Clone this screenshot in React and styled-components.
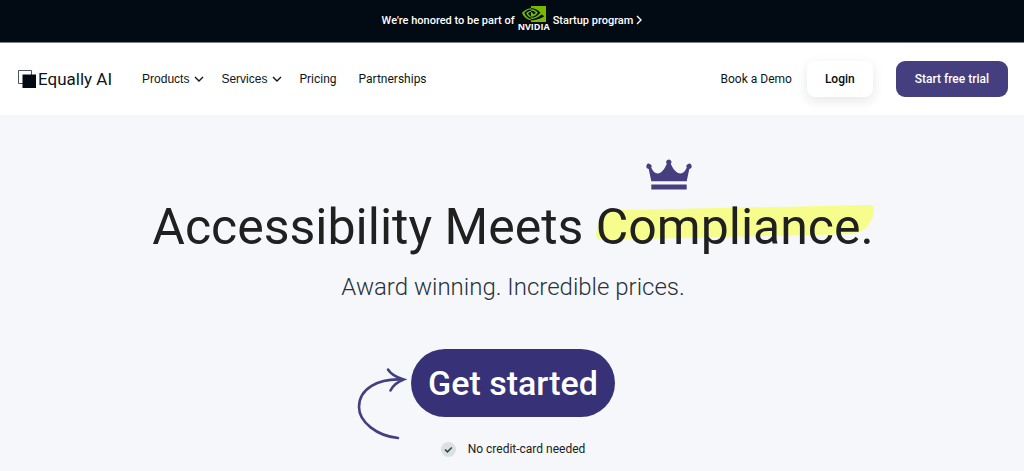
import React from "react";
import styled, { createGlobalStyle } from "styled-components";
import { SiNvidia } from "react-icons/si";

const GlobalStyle = createGlobalStyle`
  * {
    box-sizing: border-box;
  }

  body {
    margin: 0;
    background: #f6f7fb;
    color: #0b1620;
    font-family: Roboto, "Liberation Sans", sans-serif;
    font-size: 12px;
  }

  a {
    color: inherit;
    text-decoration: none;
  }
`;

// Banner
const Banner = styled.a`
  display: flex;
  align-items: center;
  justify-content: center;
  gap: 3px;
  height: 43px;
  padding-bottom: 2px;
  border-bottom: 1px solid #7d8288;
  background: #020a14;
  && {
    color: #fff;
  }
  font-size: 11px;
  font-weight: 500;
`;

const Nvidia = styled.span`
  display: flex;
  flex-direction: column;
  align-items: center;
  width: 32px;
  padding-bottom: 4px;
  font-family: "Open Sans", sans-serif;
  font-size: 9px;
  font-weight: 700;
  line-height: 8px;

  svg {
    width: 24px;
    height: 24px;
    margin: -4px 0 -3px;
    color: #76b900;
  }
`;

const BannerArrow = styled.svg`
  width: 6px;
  height: 10px;
`;

// Header
const Header = styled.header`
  display: flex;
  align-items: center;
  min-height: 72px;
  padding: 0 16px 0 18px;
  background: #fff;
`;

const Logo = styled.a`
  display: flex;
  align-items: center;
  gap: 2px;
  margin-right: 30px;
  font-size: 17px;

  svg {
    width: 18px;
    height: 18px;
  }
`;

const Nav = styled.nav`
  display: flex;
  align-items: center;
  gap: 22px;
  flex: 1;
`;

const MenuButton = styled.button`
  display: flex;
  align-items: center;
  gap: 5px;
  margin-right: -5px;
  padding: 0;
  border: 0;
  background: none;
  color: inherit;
  font: 12px "Liberation Sans", Arial, sans-serif;

  svg {
    width: 10px;
    height: 6px;
  }
`;

const Actions = styled.div`
  display: flex;
  align-items: center;
`;

const Button = styled.button`
  height: 36px;
  padding: 0 ${(props) => (props.$primary ? "19px" : "18px")};
  border: 0;
  border-radius: ${(props) => (props.$primary ? "9px" : "8px")};
  background: ${(props) => (props.$primary ? "#453f80" : "#fff")};
  color: ${(props) => (props.$primary ? "#fff" : "#020a14")};
  box-shadow: ${(props) =>
    props.$primary ? "none" : "0 4px 12px rgba(20, 40, 60, 0.11)"};
  margin-left: ${(props) => (props.$primary ? "23px" : "15px")};
  font-family: inherit;
  font-size: 12px;
  font-weight: 500;
`;

// Hero
const Hero = styled.main`
  display: flex;
  flex-direction: column;
  align-items: center;
  padding: 80px 16px 12px 18px;
  text-align: center;
`;

const Title = styled.h1`
  margin: 0;
  color: #202020;
  font-size: 50px;
  font-weight: 400;
  line-height: 64px;
`;

const Marked = styled.span`
  position: relative;
  display: inline-block;
  isolation: isolate;
`;

const Highlight = styled.svg`
  position: absolute;
  z-index: -1;
  top: 10px;
  left: 0;
  width: 100%;
  height: 36px;
`;

const Crown = styled.svg`
  position: absolute;
  top: -36px;
  left: 50px;
  width: 46px;
  height: 32px;
`;

const Subtitle = styled.p`
  margin: 12px 0 0;
  color: #27313b;
  font-size: 24px;
  font-weight: 300;
  line-height: 32px;
`;

const StartWrapper = styled.div`
  position: relative;
  margin-top: 46px;
`;

const StartButton = styled.button`
  height: 68px;
  padding: 0 17px;
  border: 0;
  border-radius: 34px;
  background: #373277;
  color: #fff;
  font-family: inherit;
  font-size: 34px;
  font-weight: 500;
`;

const Arrow = styled.svg`
  position: absolute;
  top: 18px;
  right: 100%;
  width: 56px;
  height: 74px;
`;

const Note = styled.p`
  display: flex;
  align-items: center;
  gap: 12px;
  margin: 24px 0 0;
  color: #202020;
  line-height: 16px;

  svg {
    width: 15px;
    height: 15px;
  }
`;

const Chevron = () => (
  <svg viewBox="0 0 10 6" fill="none" stroke="currentColor" strokeWidth="1.4" aria-hidden="true">
    <path d="M1 1l4 4 4-4" />
  </svg>
);

const menus = ["Products", "Services"];
const links = ["Pricing", "Partnerships"];

function App() {
  return (
    <>
      <GlobalStyle />
      <Banner href="#">
        <span>We're honored to be part of</span>
        <Nvidia>
          <SiNvidia aria-hidden="true" />
          NVIDIA
        </Nvidia>
        <span>Startup program</span>
        <BannerArrow viewBox="0 0 6 10" fill="none" stroke="#fff" strokeWidth="1.4">
          <path d="M1 1l4 4-4 4" />
        </BannerArrow>
      </Banner>

      <Header>
        <Logo href="#">
          <svg viewBox="0 0 18 18" aria-hidden="true">
            <path d="M.5.5h13v13H.5z" fill="#fff" stroke="#4a535b" />
            <path d="M4.5 4.5H18V18H4.5z" fill="#020a14" />
          </svg>
          Equally AI
        </Logo>
        <Nav>
          {menus.map((item) => (
            <MenuButton key={item} type="button">
              {item}
              <Chevron />
            </MenuButton>
          ))}
          {links.map((item) => (
            <a key={item} href="#">
              {item}
            </a>
          ))}
        </Nav>
        <Actions>
          <a href="#">Book a Demo</a>
          <Button type="button">Login</Button>
          <Button type="button" $primary>
            Start free trial
          </Button>
        </Actions>
      </Header>

      <Hero>
        <Title>
          Accessibility Meets{" "}
          <Marked>
            <Highlight viewBox="0 0 277 36" preserveAspectRatio="none" aria-hidden="true">
              <path
                d="M8 6Q10 5 25 5L272 0Q277 0 277 4C276 18 268 28 255 29L5 35Q0 35 0 30Q1 18 8 6Z"
                fill="#f7fd8c"
              />
            </Highlight>
            <Crown viewBox="0 0 46 32" fill="#453f80" aria-hidden="true">
              <path d="M5.3 22.2L2.7 9.9A2.600 2.600 0 1 1 5.200 8.600C6.800 12.500 9 14.600 11.500 14.600C15.500 14.600 18.600 10 20.800 4.800A2.600 2.600 0 1 1 24.800 4.800C27 10 30.500 14.600 34.500 14.600C37 14.600 39.200 12.500 40.800 8.600A2.600 2.600 0 1 1 43.300 9.900L40.700 22.200Z" />
              <path d="M5.300 25.500h35.400v5H5.300z" />
            </Crown>
            Compliance.
          </Marked>
        </Title>
        <Subtitle>Award winning. Incredible prices.</Subtitle>
        <StartWrapper>
          <Arrow
            viewBox="0 0 56 74"
            fill="none"
            stroke="#453f80"
            strokeWidth="2.6"
            strokeLinecap="round"
            aria-hidden="true"
          >
            <path d="M43 71C22 69 4 55 4 40C4 22 23 11 48 12.500" />
            <path d="M33 2.500C36 7.500 42 10.500 48.500 12.500C42 15 38 18.500 35.500 23.500" />
          </Arrow>
          <StartButton type="button">Get started</StartButton>
        </StartWrapper>
        <Note>
          <svg viewBox="0 0 15 15" aria-hidden="true">
            <circle cx="7.500" cy="7.500" r="7.500" fill="#dedfe0" />
            <path d="M4 7.500l2.400 2.400 4.400-4.400" fill="none" stroke="#174a4a" strokeWidth="1.500" />
          </svg>
          No credit-card needed
        </Note>
      </Hero>
    </>
  );
}

export default App;
